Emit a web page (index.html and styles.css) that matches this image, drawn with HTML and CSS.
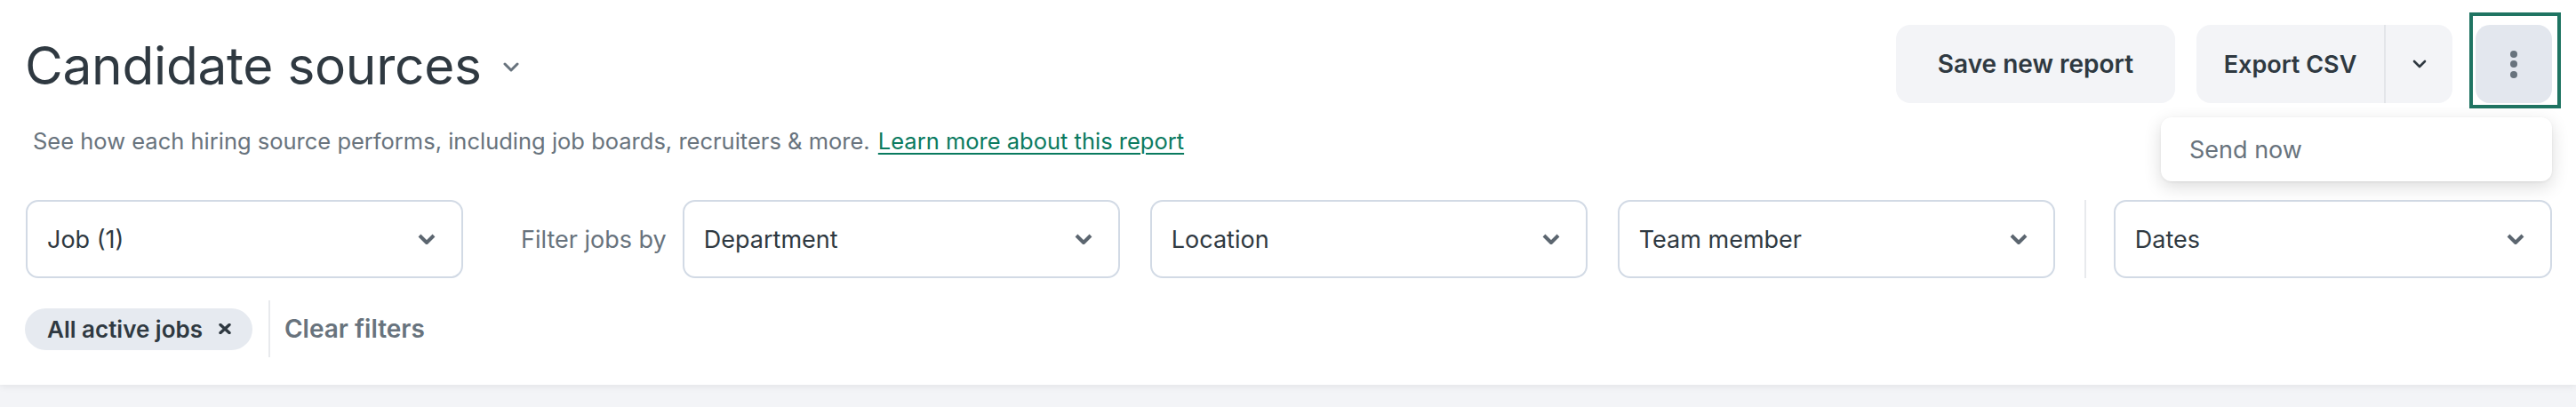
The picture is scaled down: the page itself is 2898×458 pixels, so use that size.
FILE: index.html
```html
<!DOCTYPE html>
<html lang="en">
<head>
    <meta charset="UTF-8">
    <meta name="viewport" content="width=device-width, initial-scale=1.0">
    <title>Candidate sources</title>
    <link rel="stylesheet" href="styles.css">
</head>
<body>
    <div class="report-header">
        <div class="title-row">
            <h1 class="report-title">
                Candidate sources
                <svg class="title-caret" width="18" height="11" viewBox="0 0 18 11"><path d="M2 2l7 7 7-7" fill="none" stroke="#68737d" stroke-width="3" stroke-linecap="round" stroke-linejoin="round"/></svg>
            </h1>
            <div class="actions">
                <button class="btn">Save new report</button>
                <div class="split-btn">
                    <button class="split-main">Export CSV</button>
                    <button class="split-caret">
                        <svg width="16" height="10" viewBox="0 0 16 10"><path d="M2 2l6 6 6-6" fill="none" stroke="#2f3941" stroke-width="2.6" stroke-linecap="round" stroke-linejoin="round"/></svg>
                    </button>
                </div>
                <button class="btn-more focused">
                    <span class="dot"></span>
                    <span class="dot"></span>
                    <span class="dot"></span>
                </button>
                <div class="menu">
                    <div class="menu-item">Send now</div>
                </div>
            </div>
        </div>

        <p class="report-desc">
            See how each hiring source performs, including job boards, recruiters &amp; more.
            <a href="#" class="learn-link">Learn more about this report</a>
        </p>

        <div class="filters">
            <div class="select"><span>Job (1)</span><svg class="caret" width="22" height="14" viewBox="0 0 22 14"><path d="M3 3l8 8 8-8" fill="none" stroke="#5c6670" stroke-width="4" stroke-linejoin="round"/></svg></div>
            <div class="filter-group">
                <span class="filter-label">Filter jobs by</span>
                <div class="select"><span>Department</span><svg class="caret" width="22" height="14" viewBox="0 0 22 14"><path d="M3 3l8 8 8-8" fill="none" stroke="#5c6670" stroke-width="4" stroke-linejoin="round"/></svg></div>
            </div>
            <div class="select"><span>Location</span><svg class="caret" width="22" height="14" viewBox="0 0 22 14"><path d="M3 3l8 8 8-8" fill="none" stroke="#5c6670" stroke-width="4" stroke-linejoin="round"/></svg></div>
            <div class="select"><span>Team member</span><svg class="caret" width="22" height="14" viewBox="0 0 22 14"><path d="M3 3l8 8 8-8" fill="none" stroke="#5c6670" stroke-width="4" stroke-linejoin="round"/></svg></div>
            <div class="divider"></div>
            <div class="select select-dates"><span>Dates</span><svg class="caret" width="22" height="14" viewBox="0 0 22 14"><path d="M3 3l8 8 8-8" fill="none" stroke="#5c6670" stroke-width="4" stroke-linejoin="round"/></svg></div>
        </div>

        <div class="chips">
            <span class="chip">All active jobs
                <svg class="chip-x" width="14" height="12" viewBox="0 0 14 12"><path d="M2 1.5l10 9M12 1.5l-10 9" fill="none" stroke="#2f3941" stroke-width="3.4" stroke-linecap="round"/></svg>
            </span>
            <div class="chips-divider"></div>
            <a href="#" class="clear-link">Clear filters</a>
        </div>
    </div>

    <div class="report-body"></div>
</body>
</html>
```

FILE: styles.css
```css
* {
    margin: 0;
    padding: 0;
    box-sizing: border-box;
}

body {
    font-family: Inter, 'Noto Sans', Arial, sans-serif;
    background: #f3f4f7;
    color: #2f3941;
}

.report-header {
    background: #fff;
    padding: 28px 27px 31px 28px;
    box-shadow: 0 2px 8px rgba(0, 0, 0, 0.07);
    position: relative;
}

.title-row {
    display: flex;
    justify-content: space-between;
    align-items: center;
}

.report-title {
    font-size: 58.6px;
    font-weight: 400;
    line-height: 74px;
    letter-spacing: -0.3px;
    color: #2f3941;
    display: flex;
    align-items: center;
    gap: 24px;
    margin-top: 4px;
}

.title-caret {
    margin-top: 2px;
}

.actions {
    display: flex;
    align-items: center;
    position: relative;
}

.btn {
    background: #f3f4f7;
    border: none;
    border-radius: 16px;
    height: 88px;
    width: 314px;
    font-family: Inter, Arial, sans-serif;
    font-size: 28px;
    font-weight: 600;
    color: #2f3941;
}

.split-btn {
    display: flex;
    margin-left: 24px;
    background: #f3f4f7;
    border-radius: 16px;
    height: 88px;
}

.split-main {
    background: none;
    border: none;
    width: 213px;
    font-family: Inter, Arial, sans-serif;
    font-size: 27px;
    font-weight: 600;
    color: #2f3941;
    border-right: 2px solid #e3e5e9;
}

.split-caret {
    background: none;
    border: none;
    width: 75px;
    display: flex;
    align-items: center;
    justify-content: center;
}

.btn-more {
    position: relative;
    margin-left: 26px;
    width: 86px;
    height: 88px;
    border: none;
    border-radius: 16px;
    background: #e3e7ee;
    display: flex;
    flex-direction: column;
    align-items: center;
    justify-content: center;
    gap: 3.5px;
}

.btn-more.focused::after {
    content: '';
    position: absolute;
    top: -14px;
    left: -7px;
    right: -10px;
    bottom: -6px;
    border: 4px solid #1f7462;
}

.dot {
    width: 8px;
    height: 8px;
    border-radius: 50%;
    background: #68737d;
}

.menu {
    position: absolute;
    top: 104px;
    right: 0;
    width: 440px;
    height: 72px;
    background: #fff;
    border-radius: 12px;
    box-shadow: 0 6px 20px rgba(0, 0, 0, 0.14), 0 1px 3px rgba(0, 0, 0, 0.06);
    display: flex;
    align-items: center;
    padding-left: 32px;
    z-index: 2;
}

.menu-item {
    font-size: 27px;
    color: #68737d;
}

.report-desc {
    margin-top: 27px;
    margin-left: 9px;
    font-size: 25.5px;
    line-height: 32px;
    color: #68737d;
}

.learn-link {
    margin-left: 2px;
    color: #0a7a5f;
    text-decoration: underline;
    text-decoration-thickness: 2px;
    text-underline-offset: 4px;
}

.filters {
    display: flex;
    align-items: stretch;
    gap: 34px;
    margin-top: 50px;
    padding-left: 1px;
}

.select {
    width: 492px;
    height: 88px;
    flex-shrink: 0;
    border: 2px solid #d2dae5;
    border-radius: 14px;
    padding: 0 28px 0 22px;
    display: flex;
    align-items: center;
    justify-content: space-between;
    font-size: 27px;
    color: #2f3941;
}

.select-dates {
    flex: 1;
    width: auto;
}

.filter-group {
    display: flex;
    align-items: center;
    gap: 18px;
    margin-left: 31px;
}

.filter-label {
    font-size: 27px;
    color: #68737d;
}

.divider {
    width: 2px;
    background: #e8eaed;
    margin: 0 -3px 0 -1px;
}

.chips {
    display: flex;
    align-items: center;
    margin-top: 25px;
    height: 64px;
}

.chip {
    display: inline-flex;
    align-items: center;
    gap: 18px;
    height: 47px;
    padding: 0 24px 0 25px;
    border-radius: 24px;
    background: #e6eaf0;
    font-size: 26px;
    font-weight: 600;
    color: #2f3941;
}

.chips-divider {
    width: 2px;
    height: 64px;
    background: #e8eaed;
    margin: 0 16px 0 18px;
}

.clear-link {
    font-size: 28px;
    font-weight: 600;
    color: #68737d;
    text-decoration: none;
}

.report-body {
    height: 40px;
}
```
